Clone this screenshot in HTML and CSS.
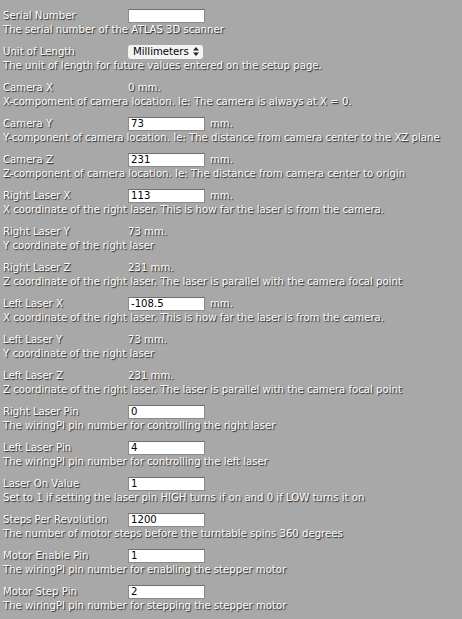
FILE: index.html
```html
<!DOCTYPE html>
<html lang="en">
<head>
    <meta charset="UTF-8">
    <title>ATLAS 3D Setup</title>
    <link rel="stylesheet" href="styles.css">
</head>
<body>
    <div class="setting">
        <div class="line"><span class="label">Serial Number</span><input class="field" type="text" value=""></div>
        <div class="desc">The serial number of the ATLAS 3D scanner</div>
    </div>
    <div class="setting">
        <div class="line"><span class="label">Unit of Length</span>
            <span class="select">Millimeters
                <svg class="arrows" width="6" height="9" viewBox="0 0 6 9"><path d="M3 0 L6 3.5 H0 Z M3 9 L6 5.5 H0 Z" fill="#222"/></svg>
            </span>
        </div>
        <div class="desc">The unit of length for future values entered on the setup page.</div>
    </div>
    <div class="setting">
        <div class="line"><span class="label">Camera X</span><span class="value">0 mm.</span></div>
        <div class="desc">X-compoment of camera location. Ie: The camera is always at X = 0.</div>
    </div>
    <div class="setting">
        <div class="line"><span class="label">Camera Y</span><input class="field" type="text" value="73"><span class="unit">mm.</span></div>
        <div class="desc">Y-component of camera location. Ie: The distance from camera center to the XZ plane</div>
    </div>
    <div class="setting">
        <div class="line"><span class="label">Camera Z</span><input class="field" type="text" value="231"><span class="unit">mm.</span></div>
        <div class="desc">Z-component of camera location. Ie: The distance from camera center to origin</div>
    </div>
    <div class="setting">
        <div class="line"><span class="label">Right Laser X</span><input class="field" type="text" value="113"><span class="unit">mm.</span></div>
        <div class="desc">X coordinate of the right laser. This is how far the laser is from the camera.</div>
    </div>
    <div class="setting">
        <div class="line"><span class="label">Right Laser Y</span><span class="value">73 mm.</span></div>
        <div class="desc">Y coordinate of the right laser</div>
    </div>
    <div class="setting">
        <div class="line"><span class="label">Right Laser Z</span><span class="value">231 mm.</span></div>
        <div class="desc">Z coordinate of the right laser. The laser is parallel with the camera focal point</div>
    </div>
    <div class="setting">
        <div class="line"><span class="label">Left Laser X</span><input class="field" type="text" value="-108.5"><span class="unit">mm.</span></div>
        <div class="desc">X coordinate of the right laser. This is how far the laser is from the camera.</div>
    </div>
    <div class="setting">
        <div class="line"><span class="label">Left Laser Y</span><span class="value">73 mm.</span></div>
        <div class="desc">Y coordinate of the right laser</div>
    </div>
    <div class="setting">
        <div class="line"><span class="label">Left Laser Z</span><span class="value">231 mm.</span></div>
        <div class="desc">Z coordinate of the right laser. The laser is parallel with the camera focal point</div>
    </div>
    <div class="setting">
        <div class="line"><span class="label">Right Laser Pin</span><input class="field" type="text" value="0"></div>
        <div class="desc">The wiringPI pin number for controlling the right laser</div>
    </div>
    <div class="setting">
        <div class="line"><span class="label">Left Laser Pin</span><input class="field" type="text" value="4"></div>
        <div class="desc">The wiringPI pin number for controlling the left laser</div>
    </div>
    <div class="setting">
        <div class="line"><span class="label">Laser On Value</span><input class="field" type="text" value="1"></div>
        <div class="desc">Set to 1 if setting the laser pin HIGH turns if on and 0 if LOW turns it on</div>
    </div>
    <div class="setting">
        <div class="line"><span class="label">Steps Per Revolution</span><input class="field" type="text" value="1200"></div>
        <div class="desc">The number of motor steps before the turntable spins 360 degrees</div>
    </div>
    <div class="setting">
        <div class="line"><span class="label">Motor Enable Pin</span><input class="field" type="text" value="1"></div>
        <div class="desc">The wiringPI pin number for enabling the stepper motor</div>
    </div>
    <div class="setting">
        <div class="line"><span class="label">Motor Step Pin</span><input class="field" type="text" value="2"></div>
        <div class="desc">The wiringPI pin number for stepping the stepper motor</div>
    </div>
</body>
</html>
```

FILE: styles.css
```css
body {
    margin: 0;
    padding: 8px 3px 0 3px;
    background-color: #a8a8a8;
    font-family: "DejaVu Sans", Verdana, sans-serif;
    font-size: 10.15px;
    color: #ffffff;
    text-shadow: 1px 1px 1px #222222;
}

.setting {
    margin-bottom: 8px;
}

.line {
    display: flex;
    align-items: center;
    height: 15px;
}

.label {
    width: 125px;
    flex-shrink: 0;
}

.desc {
    height: 13px;
    line-height: 13px;
    white-space: nowrap;
}

.field {
    box-sizing: border-box;
    width: 77px;
    height: 14px;
    margin: 0;
    padding: 0 2px;
    border: 1px solid #8a8a8a;
    border-top-color: #6e6e6e;
    background: #ffffff;
    font-family: "DejaVu Sans", Verdana, sans-serif;
    font-size: 10.15px;
    color: #000000;
    text-shadow: none;
    outline: none;
}

.unit {
    margin-left: 5px;
}

.select {
    box-sizing: border-box;
    display: flex;
    align-items: center;
    justify-content: space-between;
    width: 75px;
    height: 14px;
    padding: 0 4px 0 5px;
    background: #f4f4f4;
    border-radius: 3px;
    color: #000000;
    text-shadow: none;
}

.arrows {
    display: block;
}
```
